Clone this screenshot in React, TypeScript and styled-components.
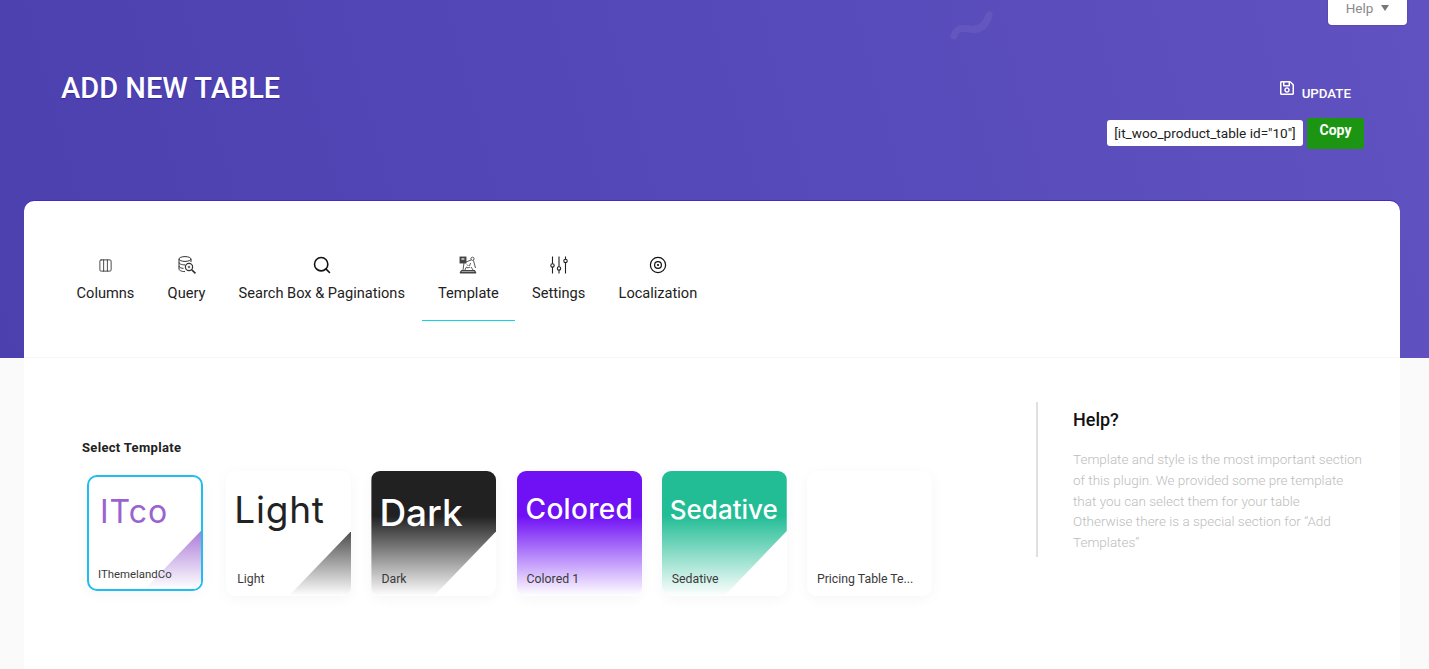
import React from "react";
import styled, { createGlobalStyle } from "styled-components";
import { Columns3, Search } from "lucide-react";
import { FaRegSave } from "react-icons/fa";

const Global = createGlobalStyle`
  html, body {
    margin: 0;
    padding: 0;
    background: #fafafa;
    font-family: Roboto, "Liberation Sans", sans-serif;
    overflow: hidden;
  }
`;

const Page = styled.div`
  height: 669px;
  overflow: hidden;
  background:
    linear-gradient(75deg, #4c3fae 0%, #5649b9 55%, #6052c0 100%) top / 100% 358px no-repeat,
    #fafafa;
`;

const Hero = styled.header`
  position: relative;
  height: 201px;
  display: flex;
  flex-direction: column;
  color: #fff;
`;

const Squiggle = styled.svg`
  position: absolute;
  left: 949px;
  top: 6px;
  opacity: 0.06;
`;

const HelpBar = styled.div`
  display: flex;
  justify-content: flex-end;
  padding-right: 22px;
`;

const HelpButton = styled.button`
  width: 79px;
  height: 25px;
  padding: 0 0 9px;
  border: 0;
  border-radius: 0 0 4px 4px;
  background: #fff;
  color: #8a8a8a;
  font: 400 13.5px Roboto, sans-serif;
  display: flex;
  align-items: center;
  justify-content: center;
  gap: 8px;
  box-shadow: 0 0 2px rgba(0, 0, 0, 0.25);

  i {
    width: 0;
    height: 0;
    border-left: 4px solid transparent;
    border-right: 4px solid transparent;
    border-top: 6px solid #777;
  }
`;

const HeroMain = styled.div`
  display: flex;
  justify-content: space-between;
  padding: 47px 65px 0 61px;
`;

const Title = styled.h1`
  margin: 0;
  font-size: 29px;
  line-height: 32px;
  font-weight: 500;
  text-shadow: 0 1px 1px rgba(40, 20, 160, 0.6);
`;

const Actions = styled.div`
  display: flex;
  flex-direction: column;
  align-items: flex-end;
  margin-top: 7px;
`;

const UpdateLink = styled.a`
  display: flex;
  align-items: flex-end;
  gap: 7px;
  margin-right: 13px;
  height: 22px;
  font-size: 13.3px;
  font-weight: 500;
  line-height: 15px;

  svg {
    margin-bottom: 5px;
  }
`;

const ShortcodeRow = styled.div`
  display: flex;
  align-items: flex-start;
  gap: 4px;
  margin-top: 17px;
`;

const Shortcode = styled.div`
  width: 196px;
  height: 26px;
  margin-top: 2px;
  box-sizing: border-box;
  border-radius: 3px;
  background: #fff;
  color: #222;
  font-size: 13.6px;
  line-height: 26px;
  text-align: center;
  white-space: nowrap;
`;

const CopyButton = styled.button`
  width: 57px;
  height: 31px;
  border: 0;
  border-radius: 2px;
  background: #1c9612;
  color: #fff;
  font: 700 14px/24px Roboto, sans-serif;
  padding: 0 0 7px;
`;

const Panel = styled.main`
  margin: 0 29px 0 24px;
  height: 468px;
  background: #fff;
  border-radius: 10px 10px 0 0;
  box-shadow: 0 -1px 0 #4526cf;
`;

const TabBar = styled.nav`
  display: flex;
  height: 157px;
  box-sizing: border-box;
  padding: 47px 36px 0;
  border-bottom: 1px solid #f6f6f6;
`;

const Tab = styled.div<{ $active?: boolean }>`
  box-sizing: border-box;
  height: 73px;
  padding: 7px 16.6px 0;
  display: flex;
  flex-direction: column;
  align-items: center;
  color: #222;
  font-size: 14.6px;
  border-bottom: 1px solid ${({ $active }) => ($active ? "#12d2e6" : "transparent")};
`;

const TabIcon = styled.span`
  height: 20px;
  display: flex;
  align-items: center;
  justify-content: center;
`;

const TabLabel = styled.span`
  margin-top: 10px;
  line-height: 17px;
  white-space: nowrap;
`;

const Body = styled.section`
  display: flex;
  justify-content: space-between;
  padding: 44px 0 0 58px;
`;

const TemplatesCol = styled.div`
  padding-top: 39px;
`;

const SectionLabel = styled.div`
  font-size: 13px;
  font-weight: 700;
  line-height: 14px;
  color: #222;
  letter-spacing: 0.32px;
`;

const ThumbRow = styled.div`
  display: flex;
  gap: 20.2px;
  margin-top: 16px;
`;

const Thumb = styled.div<{ $selected?: boolean }>`
  position: relative;
  overflow: hidden;
  flex: none;
  box-sizing: border-box;
  background: #fff;
  width: ${({ $selected }) => ($selected ? "116px" : "125px")};
  height: ${({ $selected }) => ($selected ? "116px" : "125px")};
  margin: ${({ $selected }) => ($selected ? "4px 3px 4px 5px" : "0")};
  border-radius: ${({ $selected }) => ($selected ? "10px" : "9px")};
  border: ${({ $selected }) => ($selected ? "2px solid #1fbdf0" : "0")};
  box-shadow: 0 3px 14px rgba(0, 0, 0, 0.04);
`;

const ThumbFill = styled.div<{ $gradient: string; $shape: "corner" | "notch" | "full" }>`
  position: absolute;
  inset: 0;
  background: ${({ $gradient }) => $gradient};
  clip-path: ${({ $shape }) =>
    $shape === "corner"
      ? "polygon(100% 48%, 100% 100%, 50% 100%)"
      : $shape === "notch"
      ? "polygon(0 0, 100% 0, 100% 48%, 50% 100%, 0 100%)"
      : "none"};
`;

const ThumbWord = styled.span<{ $size: number; $color: string; $left: number; $top: number; $spacing?: number; $light?: boolean }>`
  position: absolute;
  left: ${({ $left }) => $left}px;
  top: ${({ $top }) => $top}px;
  font-family: Inter, "Open Sans", sans-serif;
  font-size: ${({ $size }) => $size}px;
  line-height: 1;
  font-weight: ${({ $light }) => ($light ? 400 : 500)};
  color: ${({ $color }) => $color};
  letter-spacing: ${({ $spacing }) => $spacing ?? 0}px;
`;

const ThumbName = styled.span<{ $left: number; $small?: boolean }>`
  position: absolute;
  left: ${({ $left }) => $left}px;
  bottom: ${({ $small }) => ($small ? "8px" : "10px")};
  font-size: ${({ $small }) => ($small ? "11.4px" : "12.3px")};
  line-height: 14px;
  font-weight: 400;
  color: #3a3a3a;
  white-space: nowrap;
`;

const HelpCol = styled.aside`
  width: 364px;
  height: 155px;
  box-sizing: border-box;
  padding-left: 35px;
  border-left: 2px solid #e0e0e0;
`;

const HelpTitle = styled.h3`
  margin: 6px 0 0;
  font-size: 18px;
  line-height: 24px;
  font-weight: 500;
  color: #111;
`;

const HelpText = styled.p`
  margin: 17px 0 0;
  width: 292px;
  font-size: 13.5px;
  line-height: 20.8px;
  font-weight: 300;
  color: #bdbdbd;
`;

const QueryIcon = () => (
  <svg width="20" height="20" viewBox="0 0 20 20" fill="none" stroke="#333" strokeWidth="1">
    <ellipse cx="8" cy="4" rx="6" ry="2.4" />
    <path d="M2 4v10c0 1.4 2.6 2.6 6 2.6M14 4v3M2 7.5c0 1.3 2.6 2.4 6 2.4M2 11c0 1.3 2 2.2 4.5 2.4" />
    <circle cx="12" cy="12" r="3.6" strokeWidth="1.2" />
    <path d="M14.8 14.8 18.5 18.3" strokeWidth="1.6" />
    <circle cx="12" cy="12" r="1.3" fill="#777" stroke="none" />
  </svg>
);

const TemplateIcon = () => (
  <svg width="20" height="20" viewBox="0 0 20 20" fill="none" stroke="#444" strokeWidth="0.9">
    <rect x="2" y="2" width="6" height="6" fill="#444" />
    <rect x="3.4" y="3.4" width="3" height="1.2" fill="#fff" stroke="none" />
    <circle cx="14.5" cy="3.8" r="1.6" />
    <path d="M8 7 13 5M6 8l-1 7M15.5 5.5l2 7.5M9 9.5l1.5 1.5M12.5 8l-1 3M13 12l2 3M8 12.5 7 15" />
    <path d="M2 18h16M3.5 15.5h13L18 18M3.5 15.5 2 18M3 17h14" strokeWidth="1.1" />
    <path d="M8 12c1 1 3 1 4 0" />
  </svg>
);

const SlidersIcon = () => (
  <svg width="20" height="20" viewBox="0 0 20 20" fill="none" stroke="#222" strokeWidth="1.1">
    <path d="M3.5 1.5v7.2M3.5 12v6.5M10 1.5v10.2M10 15v3.5M16.5 1.5v2.7M16.5 7.5v11" />
    <circle cx="3.5" cy="10.4" r="1.7" />
    <circle cx="10" cy="13.4" r="1.7" />
    <circle cx="16.5" cy="5.9" r="1.7" />
  </svg>
);

const LocaleIcon = () => (
  <svg width="18" height="18" viewBox="0 0 18 18" fill="none" stroke="#111">
    <circle cx="9" cy="9" r="7.6" strokeWidth="1.2" />
    <circle cx="9" cy="9" r="3.4" strokeWidth="1.2" />
    <circle cx="9" cy="9" r="1.1" fill="#111" stroke="none" />
  </svg>
);

const tabs = [
  { label: "Columns", icon: <Columns3 size={15} strokeWidth={1.4} color="#333" /> },
  { label: "Query", icon: <QueryIcon /> },
  { label: "Search Box & Paginations", icon: <Search size={20} strokeWidth={1.9} color="#111" /> },
  { label: "Template", icon: <TemplateIcon />, active: true },
  { label: "Settings", icon: <SlidersIcon /> },
  { label: "Localization", icon: <LocaleIcon /> },
];

export default function App() {
  return (
    <Page>
      <Global />
      <Hero>
        <Squiggle width="48" height="36" viewBox="0 0 48 36" fill="none">
          <path d="M5 30c3-9 9-8 15-7s16 1 20-14" stroke="#fff" strokeWidth="7" strokeLinecap="round" />
        </Squiggle>
        <HelpBar>
          <HelpButton>
            Help <i />
          </HelpButton>
        </HelpBar>
        <HeroMain>
          <Title>ADD NEW TABLE</Title>
          <Actions>
            <UpdateLink>
              <FaRegSave size={16} />
              UPDATE
            </UpdateLink>
            <ShortcodeRow>
              <Shortcode>[it_woo_product_table id="10"]</Shortcode>
              <CopyButton>Copy</CopyButton>
            </ShortcodeRow>
          </Actions>
        </HeroMain>
      </Hero>
      <Panel>
        <TabBar>
          {tabs.map((tab) => (
            <Tab key={tab.label} $active={tab.active}>
              <TabIcon>{tab.icon}</TabIcon>
              <TabLabel>{tab.label}</TabLabel>
            </Tab>
          ))}
        </TabBar>
        <Body>
          <TemplatesCol>
            <SectionLabel>Select Template</SectionLabel>
            <ThumbRow>
              <Thumb $selected>
                <ThumbFill $shape="corner" $gradient="linear-gradient(180deg, #a877d6 46%, #fff 100%)" />
                <ThumbWord $size={32} $color="#9a63cf" $left={11} $top={19} $spacing={1} $light>ITco</ThumbWord>
                <ThumbName $left={9} $small>IThemelandCo</ThumbName>
              </Thumb>
              <Thumb>
                <ThumbFill $shape="corner" $gradient="linear-gradient(180deg, #444 46%, #fff 100%)" />
                <ThumbWord $size={37} $color="#222" $left={8} $top={20} $spacing={0.8} $light>Light</ThumbWord>
                <ThumbName $left={11}>Light</ThumbName>
              </Thumb>
              <Thumb>
                <ThumbFill $shape="notch" $gradient="linear-gradient(180deg, #212121 36%, #fff 100%)" />
                <ThumbWord $size={37} $color="#fff" $left={8} $top={23}>Dark</ThumbWord>
                <ThumbName $left={10}>Dark</ThumbName>
              </Thumb>
              <Thumb>
                <ThumbFill $shape="full" $gradient="linear-gradient(180deg, #6f10f5 36%, #fff 100%)" />
                <ThumbWord $size={28} $color="#fff" $left={9} $top={24} $spacing={0.3}>Colored</ThumbWord>
                <ThumbName $left={10}>Colored 1</ThumbName>
              </Thumb>
              <Thumb>
                <ThumbFill $shape="notch" $gradient="linear-gradient(180deg, #22bd95 36%, #fff 100%)" />
                <ThumbWord $size={26} $color="#fff" $left={8} $top={26}>Sedative</ThumbWord>
                <ThumbName $left={10}>Sedative</ThumbName>
              </Thumb>
              <Thumb>
                <ThumbName $left={10}>Pricing Table Te...</ThumbName>
              </Thumb>
            </ThumbRow>
          </TemplatesCol>
          <HelpCol>
            <HelpTitle>Help?</HelpTitle>
            <HelpText>
              Template and style is the most important section of this plugin. We provided some pre template that you
              can select them for your table
              <br />
              Otherwise there is a special section for “Add Templates”
            </HelpText>
          </HelpCol>
        </Body>
      </Panel>
    </Page>
  );
}
